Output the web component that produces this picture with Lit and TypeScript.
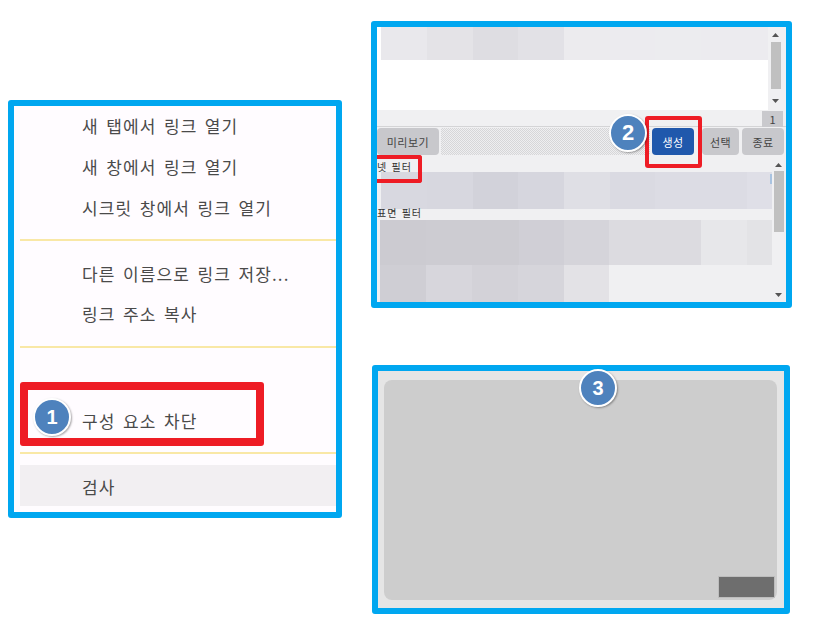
import { LitElement, html, css } from "lit";
import { customElement } from "lit/decorators.js";

type Cell = [number, string];
const rowA: Cell[] = [[46,"#e9e8ec"],[46,"#e4e3e7"],[45,"#dedde2"],[46,"#e2e1e6"],[46,"#ecebee"],[45,"#ecebef"],[46,"#eceCef"],[46,"#ecebef"],[21,"#ecebef"]];
const rowB: Cell[] = [[46,"#d8d8e0"],[46,"#d7d7df"],[45,"#d2d2da"],[46,"#d6d6de"],[46,"#dfdfe5"],[45,"#dadae2"],[46,"#dcdce4"],[46,"#dcdce4"],[25,"#dfdfe7"]];
const rowC: Cell[] = [[46,"#cccbd1"],[93,"#cdccd2"],[45,"#d0cfd6"],[45,"#d5d4da"],[45,"#dcdbe0"],[47,"#dcdbe0"],[46,"#e7e7ea"],[25,"#e3e3e6"]];
const rowD: Cell[] = [[46,"#cfced4"],[46,"#d7d6dc"],[46,"#d3d2d8"],[46,"#d6d5db"],[45,"#e3e2e6"]];

const up = html`<svg class="arrow" width="7" height="4" viewBox="0 0 7 4"><path d="M3.5 0L7 4H0z"/></svg>`;
const down = html`<svg class="arrow" width="7" height="4" viewBox="0 0 7 4"><path d="M0 0H7L3.5 4z"/></svg>`;

@customElement("app-root")
export class AppRoot extends LitElement {
  static styles = css`
    :host { display: block; width: 816px; height: 636px; overflow: hidden; background: #fff;
      font-family: "Noto Sans CJK KR", "Noto Sans", sans-serif; color: #444; }
    * { box-sizing: border-box; }
    .page { display: flex; align-items: flex-start; padding-left: 8px; }
    .panel { position: relative; border: 6px solid #00a7f0; border-radius: 3px; }

    .menu { margin-top: 100px; width: 334px; height: 418px; background: #fffcff;
      padding: 0 0 0 6px; display: flex; flex-direction: column; }
    .item { height: 41px; flex: none; display: flex; align-items: center; padding: 0 0 2px 62px;
      font-size: 17px; letter-spacing: 1.15px; word-spacing: 2.4px; color: #4a4a4a; white-space: nowrap; }
    .sep { height: 2px; background: #f9e8a6; flex: none; }
    .g1 { margin-top: 10px; }
    .g1b { margin-top: 10px; }
    .g2 { margin-top: 11px; }
    .spacer { height: 53px; flex: none; }
    .item.hover { background: #f2eff2; margin-top: 11px; padding: 2px 0 0 62px; }
    .tight { height: 40px; padding-bottom: 4px; }
    .after-sep { margin-top: 13px; }

    .right { margin-left: 29px; display: flex; flex-direction: column; align-items: flex-start; }

    .editor { margin-top: 21px; width: 421px; height: 287px; background: #f0f0f2; overflow: hidden; }
    .top { display: flex; height: 83px; }
    .list { width: 391px; background: #fff; }
    .cells { display: flex; }
    .cells.first { padding-left: 4px; height: 33px; }
    .cell { height: 100%; }
    .vscroll { width: 15px; background: #f0f0f2; display: flex; flex-direction: column; align-items: center; }
    .arrow { fill: #555; flex: none; }
    .thumb { width: 10px; background: #c0c0c0; flex: none; }
    .vs1 { padding-top: 6px; }
    .vs1 .thumb { height: 47px; margin: 5px 0 10px; }
    .pager { height: 17px; display: flex; justify-content: flex-end; padding-right: 3px; border-bottom: 1px solid #d4d4d6; }
    .page-no { width: 21px; height: 16px; margin-top: 1px; background: #c9c9cd; font-size: 11px; display: flex; align-items: center; justify-content: center; }
    .buttons { display: flex; align-items: center; height: 27px; margin-top: 1px; }
    .btn { height: 27px; border-radius: 4px; background: #c8c8cc; font-size: 11px; letter-spacing: 0.5px;
      display: flex; align-items: center; justify-content: center; color: #444; flex: none; }
    .preview { width: 62px; margin-right: 2px; }
    .dots { width: 209px; height: 27px; margin-right: 2px; flex: none;
      background: repeating-conic-gradient(#d6d6d8 0 25%, #eeeef0 0 50%) 0 0 / 2px 2px; }
    .create { width: 42px; margin-right: 3px; background: #2058ac; color: #fff; }
    .choose { width: 37px; margin-left: 5px; margin-right: 3px; }
    .close { width: 42px; }
    .lower { display: flex; position: relative; }
    .filters { width: 395px; }
    .label { font-size: 10px; letter-spacing: 1px; word-spacing: 1px; color: #333; white-space: nowrap; height: 15px; line-height: 15px; }
    .label.a { margin-top: 4px; height: 13px; }
    .label.b { height: 11px; line-height: 7px; }
    .cells.r2 { height: 37px; padding-left: 4px; }
    .cells.r3 { height: 45px; padding-left: 3px; }
    .cells.r4 { height: 37px; padding-left: 3px; }
    .vs2 { width: 13px; padding-top: 8px; height: 145px; }
    .vs2 .thumb { height: 61px; margin: 4px 0 61px; }
    .tick { position: absolute; left: 393px; top: 19px; width: 2px; height: 10px; background: #a9c3e0; }

    .preview-panel { margin-top: 57px; margin-left: 1px; width: 418px; height: 249px; background: #e5e5e5; padding: 9px 7px 8px 6px; }
    .canvas { height: 220px; background: #cdcdcd; border-radius: 8px; display: flex; align-items: flex-end; justify-content: flex-end; padding: 0 3px 3px 0; }
    .thumbnail { width: 55px; height: 20px; background: #6e6e6e; box-shadow: 0 0 0 1px #bdbdbd; }

    .red { position: absolute; border-style: solid; border-color: #ee1c25; border-radius: 3px; }
    .red1 { left: 6px; top: 276px; width: 244px; height: 64px; border-width: 8px; }
    .red2 { left: 268px; top: 89px; width: 57px; height: 52px; border-width: 4px; }
    .red3 { left: -6px; top: 128px; width: 51px; height: 28px; border-width: 4px 4px 4px 0; border-radius: 0 3px 3px 0; }

    .badge { position: absolute; width: 38px; height: 38px; border-radius: 50%; background: #4e82bd;
      border: 2.5px solid #fff; box-shadow: 1px 1px 2px rgba(0,0,0,.35);
      color: #fff; font: bold 20px "Liberation Sans", sans-serif;
      display: flex; align-items: center; justify-content: center; }
    .b1 { left: 19px; top: 292px; }
    .b2 { left: 232px; top: 87px; font-size: 22px; }
    .b3 { left: 201px; top: -2px; }
  `;

  private cells(row: Cell[]) {
    return row.map(([w, c]) => html`<div class="cell" style="width:${w}px;background:${c}"></div>`);
  }

  render() {
    return html`
      <div class="page">
        <section class="panel menu">
          <div class="item">새 탭에서 링크 열기</div>
          <div class="item">새 창에서 링크 열기</div>
          <div class="item">시크릿 창에서 링크 열기</div>
          <div class="sep g1"></div>
          <div class="item after-sep">다른 이름으로 링크 저장...</div>
          <div class="item tight">링크 주소 복사</div>
          <div class="sep g2"></div>
          <div class="spacer"></div>
          <div class="item">구성 요소 차단</div>
          <div class="sep g1b"></div>
          <div class="item hover">검사</div>
          <div class="red red1"></div>
          <div class="badge b1">1</div>
        </section>
        <div class="right">
          <section class="panel editor">
            <div class="top">
              <div class="list"><div class="cells first">${this.cells(rowA)}</div></div>
              <div class="vscroll vs1">${up}<div class="thumb"></div>${down}</div>
            </div>
            <div class="pager"><div class="page-no">1</div></div>
            <div class="buttons">
              <div class="btn preview">미리보기</div>
              <div class="dots"></div>
              <div class="btn create">생성</div>
              <div class="btn choose">선택</div>
              <div class="btn close">종료</div>
            </div>
            <div class="lower">
              <div class="filters">
                <div class="label a">넷 필터</div>
                <div class="cells r2">${this.cells(rowB)}</div>
                <div class="label b">표면 필터</div>
                <div class="cells r3">${this.cells(rowC)}</div>
                <div class="cells r4">${this.cells(rowD)}</div>
              </div>
              <div class="vscroll vs2">${up}<div class="thumb"></div>${down}</div>
              <div class="tick"></div>
            </div>
            <div class="red red2"></div>
            <div class="red red3"></div>
            <div class="badge b2">2</div>
          </section>
          <section class="panel preview-panel">
            <div class="canvas"><div class="thumbnail"></div></div>
            <div class="badge b3">3</div>
          </section>
        </div>
      </div>
    `;
  }
}
